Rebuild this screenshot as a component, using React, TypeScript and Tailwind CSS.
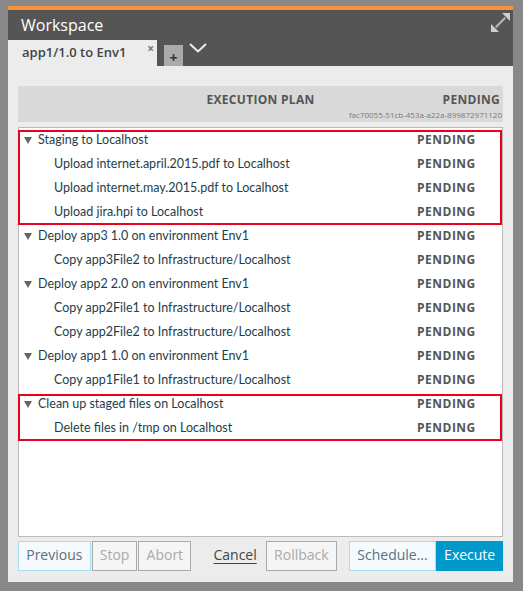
import React from "react";

type Row = { label: string; child?: boolean; group?: boolean };

const steps: Row[][] = [
  [
    { label: "Staging to Localhost", group: true },
    { label: "Upload internet.april.2015.pdf to Localhost", child: true },
    { label: "Upload internet.may.2015.pdf to Localhost", child: true },
    { label: "Upload jira.hpi to Localhost", child: true },
  ],
  [
    { label: "Deploy app3 1.0 on environment Env1", group: true },
    { label: "Copy app3File2 to Infrastructure/Localhost", child: true },
  ],
  [
    { label: "Deploy app2 2.0 on environment Env1", group: true },
    { label: "Copy app2File1 to Infrastructure/Localhost", child: true },
    { label: "Copy app2File2 to Infrastructure/Localhost", child: true },
  ],
  [
    { label: "Deploy app1 1.0 on environment Env1", group: true },
    { label: "Copy app1File1 to Infrastructure/Localhost", child: true },
  ],
  [
    { label: "Clean up staged files on Localhost", group: true },
    { label: "Delete files in /tmp on Localhost", child: true },
  ],
];

const highlighted = [0, 4];

function PlanRow({ row }: { row: Row }) {
  return (
    <div className="flex h-[24px] items-center">
      <div className="flex flex-1 items-center pl-[5px]">
        {row.group ? (
          <span className="flex w-[14px] items-center">
            <svg width="8" height="7" viewBox="0 0 8 7" fill="#666">
              <path d="M0 0 H8 L4 7 Z" />
            </svg>
          </span>
        ) : (
          <span className="w-[30px]" />
        )}
        <span className="font-['Lato'] text-[12.5px] text-[#1f3d4a]">{row.label}</span>
      </div>
      <span className="w-[85px] font-['Open_Sans'] text-[12px] font-bold tracking-[0.5px] text-[#555]">
        PENDING
      </span>
    </div>
  );
}

function ExpandIcon() {
  return (
    <svg width="19" height="19" viewBox="0 0 19 19" fill="#cfcfcf">
      <path d="M19 0 L19 8 L11 0 Z" />
      <path d="M0 19 L0 11 L8 19 Z" />
      <path d="M13.5 4 L15 5.5 L5.5 15 L4 13.5 Z" fillOpacity="0.8" />
    </svg>
  );
}

export default function App() {
  return (
    <div className="h-[591px] w-[523px] bg-[#888] pl-[8px] pt-[6px] font-['Open_Sans',sans-serif]">
      <div className="w-[505px] border-t-4 border-[#f7943a]">
        <div className="bg-[#555]">
          <div className="flex h-[30px] items-start justify-between pl-[13px] pr-[3px]">
            <span className="mt-[3px] text-[16px] text-white">Workspace</span>
            <span className="mt-[3px]">
              <ExpandIcon />
            </span>
          </div>
          <div className="flex h-[26px] items-end">
            <div className="relative flex h-[26px] w-[149px] items-center bg-[#ececec] pl-[14px]">
              <span className="text-[13px] font-semibold text-[#444]">app1/1.0 to Env1</span>
              <span className="absolute right-[3px] top-[3px] text-[12px] font-bold leading-none text-[#777]">
                ×
              </span>
            </div>
            <div className="ml-[7px] flex h-[21px] w-[19px] items-end justify-center bg-[#aaa] pb-[1px] text-[14px] font-bold leading-none text-[#333]">
              +
            </div>
            <svg className="mb-[13px] ml-[6px]" width="18" height="10" viewBox="0 0 18 10" fill="none" stroke="#eee" strokeWidth="2">
              <path d="M1 1 L9 8.5 L17 1" />
            </svg>
          </div>
        </div>
        <div className="flex h-[516px] flex-col bg-[#ececec] px-[10px] pt-[20px]">
          <div className="relative flex h-[36px] items-start bg-[#d9d9d9] pt-[4px]">
            <span className="absolute left-0 right-0 top-[5px] text-center text-[12px] font-bold tracking-[0.3px] text-[#555]">
              EXECUTION PLAN
            </span>
            <div className="ml-auto flex flex-col items-end pr-[1px]">
              <span className="pr-[2px] text-[12px] font-bold leading-[20px] tracking-[0.3px] text-[#555]">PENDING</span>
              <span className="text-[8px] leading-[10px] text-[#7a7a7a]">fac70055-51cb-453a-a22a-899872971120</span>
            </div>
          </div>
          <div className="mt-[5px] h-[410px] border border-[#bbb] bg-white">
            {steps.map((g, i) => (
              <div key={i} className="relative">
                {g.map((r, j) => (
                  <PlanRow key={j} row={r} />
                ))}
                {highlighted.includes(i) && (
                  <div className="pointer-events-none absolute bottom-[-1px] left-[-1px] right-0 top-[2px] border-2 border-[#e8001e]" />
                )}
              </div>
            ))}
          </div>
          <div className="mt-[4px] flex h-[30px] items-stretch pb-0 text-[14px] leading-[26px]">
            <button className="w-[73px] border border-[#a9ddef] bg-[#f4fafd] pb-[2px] text-[#5a7180]">Previous</button>
            <button className="ml-[1px] w-[46px] border border-[#aaa] bg-[#f5f5f5] pb-[2px] text-[#aaa]">Stop</button>
            <button className="ml-[1px] w-[53px] border border-[#aaa] bg-[#f5f5f5] pb-[2px] text-[#aaa]">Abort</button>
            <button className="ml-[22px] w-[44px] pb-[2px] text-[#444] underline underline-offset-[3px]">Cancel</button>
            <button className="ml-[9px] w-[71px] border border-[#aaa] bg-[#f5f5f5] pb-[2px] text-[#aaa]">Rollback</button>
            <button className="ml-[12px] w-[88px] border border-[#a9ddef] bg-[#f4fafd] pb-[2px] text-[#5a7180]">Schedule...</button>
            <button className="w-[67px] bg-[#0099cc] pb-[2px] text-white">Execute</button>
          </div>
        </div>
      </div>
    </div>
  );
}
